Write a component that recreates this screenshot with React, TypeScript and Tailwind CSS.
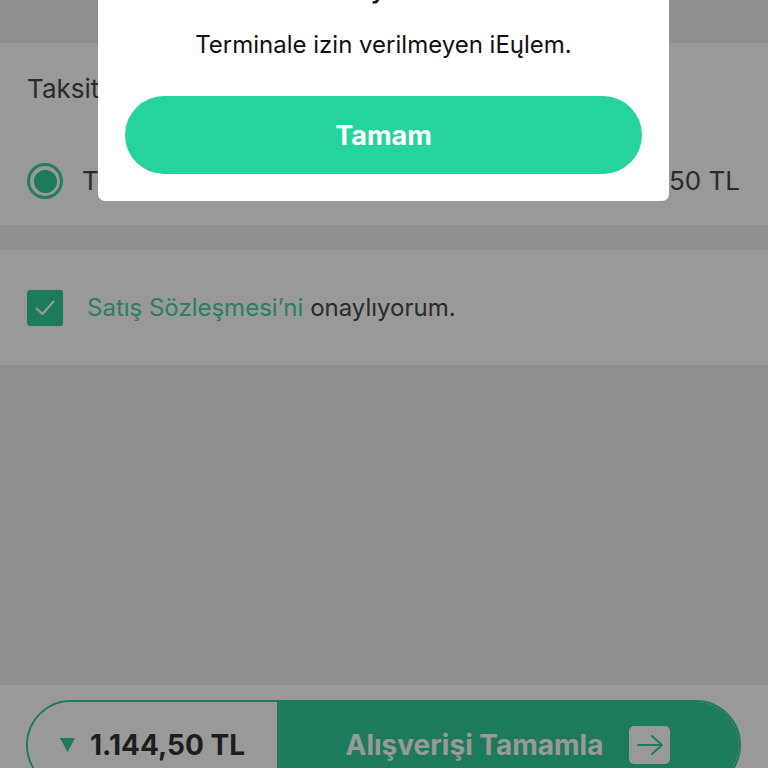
import React from "react";

const font = { fontFamily: "Inter, 'Noto Sans', sans-serif" };

export default function App() {
  return (
    <div className="relative w-[768px] h-[768px] overflow-hidden bg-[#efefef]" style={font}>
      {/* page */}
      <div className="flex flex-col h-full">
        <div className="h-[43px] bg-[#efefef]" />
        <div className="bg-white h-[182px] flex flex-col px-[27px]">
          <div className="mt-[33px] text-[26px] leading-none text-[#484848]">Taksit Seçenekleri</div>
          <div className="mt-[61px] flex items-center">
            <div className="w-[36px] h-[36px] rounded-full border-[3px] border-[#3fcf9f] flex items-center justify-center">
              <div className="w-[23px] h-[23px] rounded-full bg-[#32cb9b]" />
            </div>
            <div className="ml-[19px] text-[26px] leading-none text-[#484848]">Tek Çekim</div>
            <div className="ml-auto mr-[1px] text-[26px] leading-none text-[#484848]">1.144,50 TL</div>
          </div>
        </div>
        <div className="h-[25px] bg-[#efefef]" />
        <div className="bg-white h-[115px] flex items-center px-[27px]">
          <div className="w-[36px] h-[36px] rounded-[3px] bg-[#32cb9b] flex items-center justify-center">
            <svg width="22" height="18" viewBox="0 0 22 18" fill="none">
              <path d="M2.5 9.5 L8.5 15 L19.5 2.5" stroke="white" strokeWidth="2" strokeLinecap="round" strokeLinejoin="round" />
            </svg>
          </div>
          <div className="ml-[24px] text-[24px] leading-none">
            <span className="text-[#48d2a4]">Satış Sözleşmesi’ni</span>
            <span className="text-[#484848]"> onaylıyorum.</span>
          </div>
        </div>
        <div className="flex-1 bg-[#efefef]" />
        <div className="h-[84px] bg-white border-t border-[#e4e4e4] px-[26px] pt-[15px]">
          <div className="flex h-[90px] w-[715px] rounded-full overflow-hidden border-2 border-[#32cb9b]">
            <div className="w-[249px] flex items-center justify-center gap-[15px] bg-white">
              <svg width="15" height="14" viewBox="0 0 15 14">
                <path d="M0 0 H15 L7.5 14 Z" fill="#32cb9b" />
              </svg>
              <span className="text-[28px] font-bold leading-none text-[#333]">1.144,50 TL</span>
            </div>
            <div className="flex-1 bg-[#32cb9b] flex items-center justify-center gap-[26px]">
              <span className="text-[28px] font-bold leading-none text-white">Alışverişi Tamamla</span>
              <div className="w-[41px] h-[38px] rounded-[5px] bg-white flex items-center justify-center">
                <svg width="28" height="22" viewBox="0 0 28 22" fill="none">
                  <path d="M2 11 H26 M16 2 L26 11 L16 20" stroke="#32cb9b" strokeWidth="2" strokeLinecap="round" strokeLinejoin="round" />
                </svg>
              </div>
            </div>
          </div>
        </div>
      </div>

      {/* overlay */}
      <div className="absolute inset-0 bg-black/40" />

      {/* modal */}
      <div className="absolute left-[98px] top-0 w-[571px] bg-white rounded-b-[7px] px-[27px] pb-[27px] flex flex-col items-center">
        <div className="mt-[-20px] text-[22px] font-bold leading-none text-[#111]">Uyarı</div>
        <div className="mt-[31px] text-[24px] leading-none text-[#111]">Terminale izin verilmeyen iEųlem.</div>
        <button className="mt-[39px] w-full h-[78px] rounded-full bg-[#26d39f] text-white text-[27px] font-bold leading-none">
          Tamam
        </button>
      </div>
    </div>
  );
}
